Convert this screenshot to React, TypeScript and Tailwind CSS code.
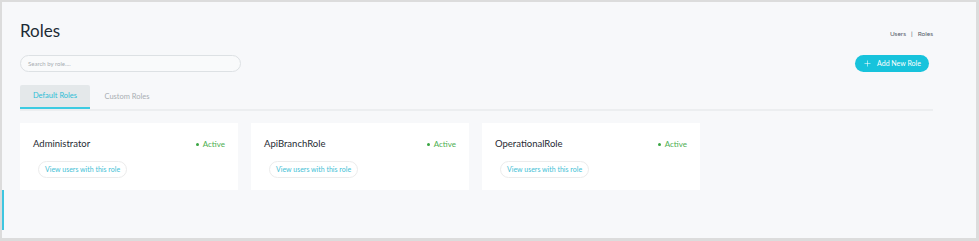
import { Plus } from "lucide-react";

const roles = [
  { name: "Administrator", active: true },
  { name: "ApiBranchRole", active: true },
  { name: "OperationalRole", active: true },
];

function RoleCard({ name, active }: { name: string; active: boolean }) {
  return (
    <div className="w-[218px] h-[67px] bg-white pl-[13px] pr-[13px] pt-[15px]">
      <div className="flex items-center justify-between h-[12px]">
        <span className="text-[9.5px] text-[#1f2b33]">{name}</span>
        {active && (
          <span className="flex items-center gap-[4px] text-[8px] text-[#4caf50]">
            <span className="w-[3px] h-[3px] rounded-full bg-[#3aa542]" />
            Active
          </span>
        )}
      </div>
      <button className="mt-[11px] ml-[5px] h-[17px] px-[6px] rounded-full border border-[#ececec] bg-white text-[7px] text-[#3fbfd6]">
        View users with this role
      </button>
    </div>
  );
}

export default function App() {
  return (
    <div className="w-[979px] h-[241px] bg-[#f7f8fa] border-t-[2px] border-l-[2px] border-r-[3px] border-b-[3px] border-[#dcdcdc] relative font-['Lato','Liberation_Sans',sans-serif] overflow-hidden">
      <div className="absolute left-0 top-[188px] w-[2px] h-[40px] bg-[#3fc6e0]" />
      <div className="pl-[18px] pr-[43px] pt-[19px]">
        <div className="flex justify-between items-start h-[20px]">
          <h1 className="text-[17px] leading-[20px] text-[#1d2b35]">Roles</h1>
          <div className="mt-[8px] text-[6.5px] text-[#55606a] flex gap-[5px]">
            <span>Users</span>
            <span>|</span>
            <span>Roles</span>
          </div>
        </div>

        <div className="flex justify-between items-center mt-[14px] h-[17px]">
          <div className="w-[221px] h-[17px] rounded-full border border-[#dde1e4] bg-[#f9fafb] flex items-center px-[7px]">
            <span className="text-[6px] text-[#a8adb2]">Search by role....</span>
          </div>
          <button className="h-[17px] w-[74px] rounded-full bg-[#17c3dc] text-white text-[7px] flex items-center justify-center gap-[5px] mr-[4px]">
            <Plus size={9} strokeWidth={1.5} />
            Add New Role
          </button>
        </div>

        <div className="mt-[13px] border-b-[2px] border-[#eceef0] flex">
          <div className="w-[70px] h-[24px] bg-[#e4e8ea] rounded-t-[2px] border-b-[2px] border-[#3ccbe2] -mb-[2px] flex items-center justify-center text-[7.5px] text-[#2cbdd6]">
            Default Roles
          </div>
          <div className="w-[74px] h-[24px] flex items-center justify-center text-[7.5px] text-[#a9aeb3]">
            Custom Roles
          </div>
        </div>

        <div className="flex gap-[13px] mt-[12px]">
          {roles.map((r) => (
            <RoleCard key={r.name} name={r.name} active={r.active} />
          ))}
        </div>
      </div>
    </div>
  );
}
